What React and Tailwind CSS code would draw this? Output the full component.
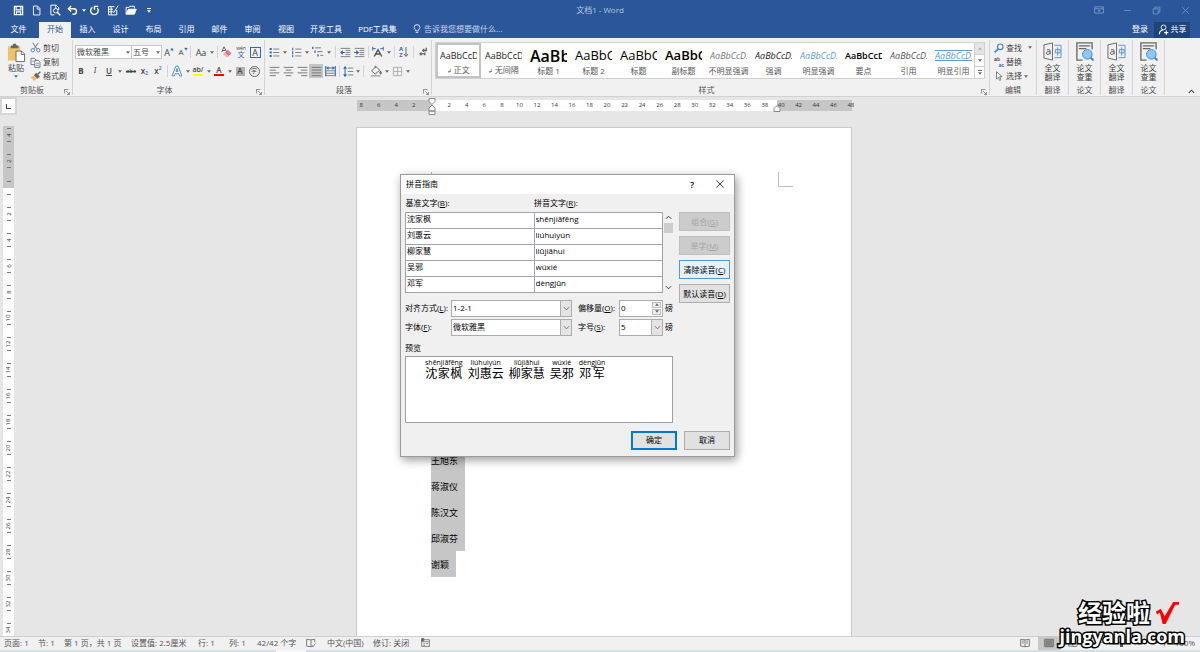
import { clsx } from 'clsx';

const TABS = [
  { name: '插入', width: 'w-[33px]' },
  { name: '设计', width: 'w-[33px]' },
  { name: '布局', width: 'w-[33px]' },
  { name: '引用', width: 'w-[33px]' },
  { name: '邮件', width: 'w-[33px]' },
  { name: '审阅', width: 'w-[33px]' },
  { name: '视图', width: 'w-[34px]' },
  { name: '开发工具', width: 'w-[46px]' },
  { name: 'PDF工具集', width: 'w-[57px]' },
];

const STYLES = [
  { name: '正文', sample: 'AaBbCcDi', mark: true, cls: 'text-[9px] text-[#222]' },
  { name: '无间隔', sample: 'AaBbCcDi', mark: true, cls: 'text-[9px] text-[#222]' },
  { name: '标题 1', sample: 'AaBb', cls: 'text-[16px] font-semibold text-black' },
  { name: '标题 2', sample: 'AaBbC', cls: 'text-[13px] text-black' },
  { name: '标题', sample: 'AaBbC', cls: 'text-[13px] text-black' },
  { name: '副标题', sample: 'AaBbC', cls: 'text-[13px] font-semibold text-black' },
  { name: '不明显强调', sample: 'AaBbCcD.', cls: 'text-[9px] italic text-[#777]' },
  { name: '强调', sample: 'AaBbCcD.', cls: 'text-[9px] italic text-[#222]' },
  { name: '明显强调', sample: 'AaBbCcD.', cls: 'text-[9px] italic text-[#5b9bd5]' },
  { name: '要点', sample: 'AaBbCcD', cls: 'text-[9px] font-semibold text-black' },
  { name: '引用', sample: 'AaBbCcD.', cls: 'text-[9px] italic text-[#555]' },
  { name: '明显引用', sample: 'AaBbCcD.', cls: 'border-y border-[#5b9bd5] text-[9px] italic text-[#5b9bd5]' },
];

const PINYIN = [
  ['沈家枫', 'shēnjiāfēng'],
  ['刘惠云', 'liúhuìyún'],
  ['柳家慧', 'liǔjiāhuì'],
  ['吴邪', 'wúxié'],
  ['邓军', 'dèngjūn'],
];

const NAMES = ['王旭东', '蒋淑仪', '陈汉文', '邱淑芬'];

const range = (from, to) => Array.from({ length: (to - from) / 2 + 1 }, (_, i) => from + i * 2);

const Icon = ({ size = 'size-3', color = '#666', children }) => (
  <svg viewBox="0 0 16 16" className={clsx(size, 'shrink-0')} fill="none" stroke={color} strokeWidth="1.3" aria-hidden="true">
    {children}
  </svg>
);

const Caret = ({ light }) => (
  <svg viewBox="0 0 6 4" className="h-[3px] w-1 shrink-0" aria-hidden="true">
    <path d="M0 0h6L3 4z" fill={light ? '#fff' : '#666'} />
  </svg>
);

const Tool = ({ label, w = 'w-[14px]', className, children }) => (
  <button type="button" aria-label={label} className={clsx('flex h-[14px] shrink-0 items-center justify-center leading-none', w, className)}>
    {children}
  </button>
);

const Drop = ({ label, w = 'w-[7px]' }) => (
  <Tool label={label} w={w}><Caret /></Tool>
);

const Sep = ({ className }) => <span className={clsx('h-3 w-px shrink-0 bg-[#d4d4d4]', className)} />;

const Group = ({ name, width, launcher, children }) => (
  <section aria-label={name} className={clsx('mt-[2px] mb-px flex flex-col border-r border-[#d4d4d4]', width)}>
    <div className="min-h-0 flex-1">{children}</div>
    <div className="flex h-[10px] items-center text-[#555]">
      <span className="flex-1 text-center whitespace-nowrap">{name}</span>
      {launcher && (
        <button type="button" aria-label={`${name}设置`} className="mr-[2px] pt-1">
          <Icon size="size-[6px]">
            <path d="M1 12V1h11M6 6l8 8M15 8v7H8" strokeWidth="2" />
          </Icon>
        </button>
      )}
    </div>
  </section>
);

const Lines = ({ d }) => <Icon size="size-[11px]" color="#777"><path d={d} strokeWidth="1.4" /></Icon>;

const TitleBar = () => (
  <header className="grid h-5 shrink-0 grid-cols-[1fr_auto_1fr] items-center text-white">
    <div className="flex items-center pl-[9px]">
      <Tool label="保存" w="w-[18px]">
        <Icon size="size-[11px]" color="#fff"><path d="M2 2h12v12H2zM4.500 2v5h7V2M5 14v-4h6v4" strokeWidth="1.8" /></Icon>
      </Tool>
      <Tool label="新建" w="w-[18px]">
        <Icon size="size-[11px]" color="#fff"><path d="M3.500 1.500h6l3.500 3.500v9.500h-9.500zM9 2v4h4" /></Icon>
      </Tool>
      <Tool label="打印预览" w="w-[19px]">
        <Icon color="#fff"><path d="M7 14.500H2.500v-13h7L13 5v3M9 2v4" /><circle cx="9" cy="9" r="3" /><path d="M11 11l4 4" strokeWidth="2" /></Icon>
      </Tool>
      <Tool label="撤消" w="w-[17px]">
        <Icon size="size-[11px]" color="#fff"><path d="M6 1.500L2 5.500l4 4M2.500 5.500H10c5 0 5 8 0 8H8" strokeWidth="2" /></Icon>
      </Tool>
      <Tool label="撤消列表" w="w-[5px]"><Caret light /></Tool>
      <Tool label="恢复" w="w-[17px]">
        <Icon size="size-[11px]" color="#fff"><path d="M5 3.500a5.500 5.500 0 1 0 7 1M8 7V2h5.500" strokeWidth="2" /></Icon>
      </Tool>
      <Tool label="表格" w="w-[19px]">
        <Icon color="#fff"><path d="M13 8v6.500H2v-11h8M2 7h6M2 10.500h5M5.500 4v10M7 9l2 2.500L15 2" /></Icon>
      </Tool>
      <Tool label="打开" w="w-[18px]">
        <Icon color="#fff"><path d="M1.500 13.500v-9h4l1-1.500h6v3" /><path d="M1.500 13.500L4.500 7H15l-2.500 6.500z" fill="#fff" /></Icon>
      </Tool>
      <Tool label="自定义快速访问工具栏" w="w-[18px]" className="flex-col gap-px">
        <span className="h-px w-1 bg-white" />
        <Caret light />
      </Tool>
    </div>
    <h1 className="text-[8px] text-[#b5c7e3]">文档1 - Word</h1>
    <div className="flex items-center justify-end">
      <Tool label="功能区显示选项" w="w-[29px]"><Icon size="size-[10px]" color="#7f9cc9"><path d="M1 3h14v10H1zM1 6h14M8 12V8M6 10l2-2 2 2" /></Icon></Tool>
      <Tool label="最小化" w="w-[29px]"><Icon size="size-[9px]" color="#7f9cc9"><path d="M2 8h12" /></Icon></Tool>
      <Tool label="还原" w="w-[29px]"><Icon size="size-[9px]" color="#7f9cc9"><path d="M2 5h9v9H2zM5 5V2h9v9h-3" /></Icon></Tool>
      <Tool label="关闭" w="w-[29px]"><Icon size="size-[9px]" color="#7f9cc9"><path d="M2 2l12 12M14 2L2 14" /></Icon></Tool>
    </div>
  </header>
);

const TabBar = () => (
  <nav className="flex h-[18px] shrink-0 items-stretch text-white">
    <button type="button" className="mr-[2px] w-[37px]">文件</button>
    <button type="button" aria-current="page" className="mt-[2px] w-8 bg-[#f1f1f1] pb-[2px] text-[#2b579a]">开始</button>
    {TABS.map((tab) => (
      <button key={tab.name} type="button" className={clsx('whitespace-nowrap', tab.width)}>{tab.name}</button>
    ))}
    <button type="button" className="ml-[6px] flex items-center gap-[2px] whitespace-nowrap text-[#c8d6ec]">
      <Icon size="size-[10px]" color="#fff"><path d="M6 11c0-2-2.500-3-2.500-5.500a4.500 4.500 0 0 1 9 0C12.500 8 10 9 10 11zM6 13.500h4" /></Icon>
      告诉我您想要做什么...
    </button>
    <button type="button" className="mr-[6px] ml-auto">登录</button>
    <button type="button" className="mt-[2px] mr-[10px] flex w-9 items-center justify-center gap-[2px] bg-[#1e4479] pb-[2px]">
      <Icon size="size-[11px]" color="#fff"><circle cx="8" cy="5" r="3.500" /><path d="M2 15c0-4 2-6 5-6M9 12.500h6M12 9.500v6" strokeWidth="1.600" /></Icon>
      共享
    </button>
  </nav>
);

const ClipboardGroup = () => (
  <Group name="剪贴板" width="w-[73px]" launcher>
    <div className="flex pl-[6px]">
      <button type="button" className="flex w-5 flex-col items-center pt-[3px]">
        <svg viewBox="0 0 20 20" className="h-5 w-[19px]" aria-hidden="true">
          <path d="M1 3h13v15H1z" fill="#eec36d" />
          <path d="M4 2h2a2 2 0 0 1 4 0h2v3H4z" fill="#666" />
          <path d="M9.500 8h6l3 3v8h-9z" fill="#fff" stroke="#666" />
          <path d="M15 8v3.500h3" fill="none" stroke="#666" />
        </svg>
        <span className="leading-[9px]">粘贴</span>
        <span className="flex h-2 items-center"><Caret /></span>
      </button>
      <div className="flex flex-col pl-1">
        <button type="button" className="flex h-[15px] items-center gap-[2px]">
          <Icon size="size-[11px]"><path d="M4 1l6 9M12 1L6 10" /><circle cx="4" cy="12" r="2.500" stroke="#3f7fc0" /><circle cx="12" cy="12" r="2.500" stroke="#3f7fc0" /></Icon>
          剪切
        </button>
        <button type="button" className="flex h-[14px] items-center gap-[2px]">
          <Icon size="size-[11px]"><path d="M1.500 2h5l2 2v7h-7z" fill="#fff" /><path d="M7 5h5l2.500 2.500V15H7z" fill="#fff" /><path d="M9 9h4M9 12h4M3 6h3" stroke="#3f7fc0" /></Icon>
          复制
        </button>
        <button type="button" className="flex h-[14px] items-center gap-[2px] whitespace-nowrap">
          <Icon size="size-[11px]"><path d="M1 9l6-3 4 4-5 5z" fill="#eebb6b" stroke="none" /><path d="M7 6l4 4 2-2-4-4zM11 5l4-4" fill="#666" strokeWidth="2" /></Icon>
          格式刷
        </button>
      </div>
    </div>
  </Group>
);

const FontGroup = () => (
  <Group name="字体" width="w-[192px]" launcher>
    <div className="flex items-center pt-[5px] pl-[2px]">
      <div className="flex h-[14px] w-[57px] items-center border border-[#c6c6c6] bg-white">
        <input aria-label="字体" defaultValue="微软雅黑" className="w-0 flex-1 pl-px outline-none" />
        <Drop label="字体列表" />
      </div>
      <div className="flex h-[14px] w-[30px] items-center border border-l-0 border-[#c6c6c6] bg-white">
        <input aria-label="字号" defaultValue="五号" className="w-0 flex-1 pl-px outline-none" />
        <Drop label="字号列表" />
      </div>
      <Tool label="增大字号" className="text-[9px]">A<Icon size="mb-[6px] size-[4px]" color="#2b6cb8"><path d="M2 13L8 4l6 9z" fill="#2b6cb8" /></Icon></Tool>
      <Tool label="减小字号">A<Icon size="mb-[6px] size-[4px]" color="#2b6cb8"><path d="M2 4l6 9 6-9z" fill="#2b6cb8" /></Icon></Tool>
      <Sep className="mr-[3px]" />
      <Tool label="更改大小写" className="text-[9px]">Aa</Tool>
      <Drop label="大小写选项" />
      <Sep className="mx-[2px]" />
      <Tool label="清除格式">
        <Icon><path d="M3 11l6-6 5 5-6 5z" fill="#e0748a" stroke="none" /><path d="M3 11l2-2 5 4-2 2z" fill="#f3b3bf" stroke="none" /><path d="M1 8l3-7 3 6M2 6h4" /></Icon>
      </Tool>
      <Tool label="拼音指南" className="flex-col">
        <span className="text-[5px] leading-[6px]">wén</span>
        <span className="text-[7px] leading-[8px] text-[#2b6cb8]">文</span>
      </Tool>
      <Tool label="字符边框"><span className="flex size-[11px] items-center justify-center border border-[#2b6cb8] text-[9px]">A</span></Tool>
    </div>
    <div className="flex items-center pt-[5px] pl-px">
      <Tool label="加粗" className="font-bold">B</Tool>
      <Tool label="倾斜" className="font-serif italic">I</Tool>
      <Tool label="下划线" className="font-semibold underline">U</Tool>
      <Drop label="下划线样式" />
      <Tool label="删除线" className="ml-px text-[6px] font-semibold line-through">abc</Tool>
      <Tool label="下标" w="w-[13px]" className="font-semibold">x<span className="mt-[5px] text-[5px] text-[#2b6cb8]">2</span></Tool>
      <Tool label="上标" w="w-[14px]" className="font-semibold">x<span className="mb-[5px] text-[5px] text-[#2b6cb8]">2</span></Tool>
      <Sep className="mx-[2px]" />
      <Tool label="文本效果"><Icon color="#4a86c8"><path d="M1.500 14.500L6.500 1.500h3l5 13h-3l-1-3h-5l-1 3zM6.500 8.500h3L8 4.500z" fill="#fff" /></Icon></Tool>
      <Drop label="文本效果选项" />
      <Tool label="突出显示" className="flex-col">
        <span className="text-[7px] leading-[8px] font-semibold">ab/</span>
        <span className="h-[2px] w-[10px] bg-[#ffff00]" />
      </Tool>
      <Drop label="突出显示颜色" />
      <Tool label="字体颜色" className="flex-col">
        <span className="text-[8px] leading-[8px] font-semibold">A</span>
        <span className="h-[2px] w-[10px] bg-[#ff0000]" />
      </Tool>
      <Drop label="字体颜色选项" />
      <Tool label="字符底纹"><span className="flex size-[9px] items-center justify-center bg-[#b0b0b0] font-semibold">A</span></Tool>
      <Tool label="带圈字符"><span className="flex size-[11px] items-center justify-center rounded-full border border-[#666] text-[6px]">字</span></Tool>
    </div>
  </Group>
);

const ListIcon = ({ numbered }) => (
  <Icon size="size-[11px]">
    <path d="M6 3h9M6 8h9M6 13h9" stroke="#777" />
    <path d={numbered ? 'M2.500 1v4M2.500 6v4M2.500 11v4' : 'M1 3h3M1 8h3M1 13h3'} stroke="#2b6cb8" strokeWidth={numbered ? '1.500' : '3'} />
  </Icon>
);

const ParagraphGroup = () => (
  <Group name="段落" width="w-[167px]" launcher>
    <div className="flex items-center pt-[5px] pl-[2px]">
      <Tool label="项目符号"><ListIcon /></Tool>
      <Drop label="项目符号库" />
      <Tool label="编号" className="ml-px"><ListIcon numbered /></Tool>
      <Drop label="编号库" />
      <Tool label="多级列表" className="ml-px"><Icon><path d="M1 1v3M4 6v3M8 11v3" stroke="#2b6cb8" strokeWidth="1.800" /><path d="M4 2.500h8M7 7.500h7M11 12.500h4" stroke="#777" /></Icon></Tool>
      <Drop label="多级列表库" />
      <Sep className="mr-[2px] ml-[3px]" />
      <Tool label="减少缩进量"><Icon size="size-[11px]"><path d="M1 2h14M8 5h7M8 8h7M8 11h7M1 14h14" stroke="#777" /><path d="M7 8H1.500M4 5.500L1.500 8 4 10.500" stroke="#2b6cb8" strokeWidth="1.800" /></Icon></Tool>
      <Tool label="增加缩进量"><Icon size="size-[11px]"><path d="M1 2h14M8 5h7M8 8h7M8 11h7M1 14h14" stroke="#777" /><path d="M0 8h6M3.500 5.500L6 8l-2.500 2.500" stroke="#2b6cb8" strokeWidth="1.800" /></Icon></Tool>
      <Sep className="mx-[2px]" />
      <Tool label="中文版式"><Icon color="#555"><path d="M3 14l5-9 5 9M5 10.500h6" strokeWidth="2" /><path d="M1 1v5M15 1v5M1 3.500h4M11 3.500h4" stroke="#2b6cb8" /></Icon></Tool>
      <Drop label="中文版式选项" />
      <Sep className="mx-[2px]" />
      <Tool label="排序">
        <span className="flex flex-col text-[6px] leading-[6px] font-bold text-[#2b6cb8]">A<span className="text-[#8a4ba8]">Z</span></span>
        <svg viewBox="0 0 6 12" className="h-3 w-[6px]" fill="none" stroke="#666" aria-hidden="true"><path d="M3 1v9M1 8l2 2.500L5 8" /></svg>
      </Tool>
      <Sep className="mx-[2px]" />
      <Tool label="显示编辑标记"><Icon size="size-[11px]"><path d="M12 1v4H7M9 3L7 5l2 2M9 10H3M5 8l-2 2 2 2M10 8v4" strokeWidth="2" /></Icon></Tool>
    </div>
    <div className="flex items-center pt-[5px] pl-[2px]">
      <Tool label="左对齐"><Lines d="M1 2h14M1 6h9M1 10h14M1 14h9" /></Tool>
      <Tool label="居中"><Lines d="M1 2h14M4 6h8M1 10h14M4 14h8" /></Tool>
      <Tool label="右对齐"><Lines d="M1 2h14M6 6h9M1 10h14M6 14h9" /></Tool>
      <Tool label="两端对齐" className="bg-[#c5c5c5]"><Lines d="M1 2h14M1 6h14M1 10h14M1 14h14" /></Tool>
      <Tool label="分散对齐"><Icon size="size-[11px]" color="#777"><path d="M1 7h14M1 10.500h14M1 14h14" /><path d="M1 0v15M15 0v15M2 3h12M5 1L3 3l2 2M11 1l2 2-2 2" stroke="#2b6cb8" strokeWidth="1.500" /></Icon></Tool>
      <Sep className="mx-[2px]" />
      <Tool label="行距" w="w-3"><Icon size="size-[11px]"><path d="M7 3h8M7 8h8M7 13h8" stroke="#777" /><path d="M3 1v14M1 4l2-3 2 3M1 12l2 3 2-3" stroke="#2b6cb8" strokeWidth="1.500" /></Icon></Tool>
      <Drop label="行距选项" />
      <Sep className="mr-[5px] ml-[2px]" />
      <Tool label="底纹"><Icon><path d="M2 8l6-6 5 5-6 5zM7 4V1" /><path d="M14 8c2 3 1 4 0 4s-1-2 0-4z" fill="#666" /><path d="M1 14.500h13" strokeWidth="2" stroke="#aaa" /></Icon></Tool>
      <Drop label="底纹颜色" />
      <Tool label="边框"><Icon size="size-[11px]" color="#aaa"><path d="M2 2h12v12H2zM8 2v12M2 8h12" /></Icon></Tool>
      <Drop label="边框选项" />
    </div>
  </Group>
);

const StylesGroup = () => (
  <Group name="样式" width="min-w-0 flex-1" launcher>
    <div className="flex pt-[2px] pr-1 pl-[3px]">
      <div className="flex h-[37px] min-w-0 flex-1 overflow-hidden border border-[#d0d0d0] bg-white">
        {STYLES.map((style, i) => (
          <button
            key={style.name}
            type="button"
            className={clsx('flex w-[45px] shrink-0 flex-col items-center border-2', i === 0 ? 'border-[#c3c3c3]' : 'border-transparent')}
          >
            <span className="flex h-[21px] w-[37px] items-center overflow-hidden">
              <span className={clsx('leading-none whitespace-nowrap', style.cls)}>{style.sample}</span>
            </span>
            <span className="leading-[10px] whitespace-nowrap text-[#555]">
              {style.mark && <span className="text-[6px]">↲ </span>}
              {style.name}
            </span>
          </button>
        ))}
      </div>
      <div className="flex w-[10px] flex-col border border-l-0 border-[#d0d0d0] bg-white">
        <button type="button" aria-label="上一行" className="flex flex-1 items-center justify-center border-b border-[#d0d0d0] bg-[#e4e4e4]"><span className="rotate-180 opacity-40"><Caret /></span></button>
        <button type="button" aria-label="下一行" className="flex flex-1 items-center justify-center border-b border-[#d0d0d0]"><Caret /></button>
        <button type="button" aria-label="其他样式" className="flex flex-1 flex-col items-center justify-center gap-px"><span className="h-px w-1 bg-[#666]" /><Caret /></button>
      </div>
    </div>
  </Group>
);

const EditGroup = () => (
  <Group name="编辑" width="w-[47px]">
    <div className="flex flex-col pl-1">
      <button type="button" className="flex h-[15px] items-center gap-[2px]">
        <Icon size="size-[10px]" color="#3f7fc0"><circle cx="10" cy="6" r="4.500" strokeWidth="1.800" /><path d="M7 9.500L1 15" strokeWidth="2.500" /></Icon>
        查找
        <span className="ml-1"><Caret /></span>
      </button>
      <button type="button" className="flex h-[14px] items-center gap-[2px]">
        <span className="flex w-[10px] flex-col text-[5px] leading-[6px] font-bold">
          <span className="self-start">a<span className="text-[#8a4ba8]">b</span></span>
          <span className="self-end text-[#2b6cb8]">ac</span>
        </span>
        替换
      </button>
      <button type="button" className="flex h-[14px] items-center gap-[2px]">
        <Icon size="size-[10px]"><path d="M4 1v12l3-3 2 5 2-1-2-5h4z" fill="#fff" /></Icon>
        选择
        <Caret />
      </button>
    </div>
  </Group>
);

const TranslateIcon = () => (
  <svg viewBox="0 0 20 20" className="size-[19px]" fill="none" aria-hidden="true">
    <path d="M1 3l9-2v18l-9-2z" stroke="#666" />
    <path d="M12 3.500h7v13h-7M15.500 5.500v9M13 8h5v3.500h-5z" stroke="#5a94d6" />
    <path d="M4 8.500c2-1 3.500-.5 3.500 1V13M7.500 10C5 10 3.500 10.500 3.500 12s2.500 1.500 4-.5" stroke="#555" />
  </svg>
);

const CheckIcon = () => (
  <svg viewBox="0 0 20 20" className="size-[19px]" fill="none" aria-hidden="true">
    <path d="M8 19H2V1h16v7" stroke="#666" strokeWidth="1.400" />
    <path d="M4 4h12M4 7h8" stroke="#666" strokeWidth="1.400" />
    <circle cx="13" cy="13" r="5" fill="#90c8f5" stroke="#3f8ad0" />
    <path d="M16.500 16.500l3 3" stroke="#3f7fc0" strokeWidth="2" />
  </svg>
);

const AddinGroup = ({ name, top, bottom, icon, width = 'w-8' }) => (
  <Group name={name} width={width}>
    <button type="button" className="flex w-full flex-col items-center pt-[2px] leading-[9px]">
      {icon}
      <span className="mt-[2px]">{top}</span>
      <span>{bottom}</span>
    </button>
  </Group>
);

const Ribbon = () => (
  <div className="flex h-[59px] shrink-0 border-b border-[#d2d2d2] bg-[#f1f1f1] text-[#444]">
    <ClipboardGroup />
    <FontGroup />
    <ParagraphGroup />
    <StylesGroup />
    <EditGroup />
    <AddinGroup name="翻译" top="全文" bottom="翻译" icon={<TranslateIcon />} />
    <AddinGroup name="论文" top="论文" bottom="查重" icon={<CheckIcon />} />
    <AddinGroup name="翻译" top="全文" bottom="翻译" icon={<TranslateIcon />} />
    <AddinGroup name="论文" top="论文" bottom="查重" icon={<CheckIcon />} />
    <div className="flex w-[35px] items-end justify-end pr-[5px] pb-px">
      <button type="button" aria-label="折叠功能区"><Icon size="size-[7px]" color="#444"><path d="M2 11l6-6 6 6" strokeWidth="2.500" /></Icon></button>
    </div>
  </div>
);

const RulerNumbers = ({ values }) => values.map((n) => (
  <span key={n} className="flex-1 basis-0 text-center">{n}</span>
));

const HorizontalRuler = () => (
  <div className="flex h-[11px] w-[495px] text-[6px] leading-[11px] text-[#333]">
    <div className="w-[75px] bg-[#c6c6c6]">
      <div className="-ml-1 flex w-[70px]"><RulerNumbers values={[8, 6, 4, 2]} /></div>
    </div>
    <div className="relative flex flex-1 bg-white pr-[3px] pl-[9px]">
      <RulerNumbers values={range(2, 38)} />
      <svg viewBox="0 0 8 17" className="absolute -top-[2px] -left-1 h-[17px] w-2" fill="#fff" stroke="#888" aria-hidden="true">
        <path d="M1 .5h6v3l-3 3-3-3zM1 13V10l3-3 3 3v3zM1 13h6v3.500H1z" />
      </svg>
      <svg viewBox="0 0 8 7" className="absolute top-[5px] -right-1 h-[7px] w-2" fill="#fff" stroke="#888" aria-hidden="true">
        <path d="M1 6.500v-3l3-3 3 3v3z" />
      </svg>
    </div>
    <div className="w-[75px] bg-[#c6c6c6]">
      <div className="-ml-1 flex w-[87px]"><RulerNumbers values={range(40, 48)} /></div>
    </div>
  </div>
);

const Tick = () => <span className="h-px w-1 shrink-0 bg-[#777]" />;

const RulerCell = ({ n }) => (
  <div className="flex h-[26px] shrink-0 flex-col items-center justify-between py-[6px]">
    <Tick />
    <span className="-rotate-90 leading-[8px]">{n}</span>
    <Tick />
  </div>
);

const VerticalRuler = () => (
  <div className="ml-[3px] flex min-h-0 w-[11px] flex-1 flex-col overflow-hidden text-[6px] text-[#333]">
    <div className="flex h-[62px] shrink-0 flex-col justify-end overflow-hidden bg-[#c6c6c6]">
      <RulerCell n={4} />
      <RulerCell n={2} />
      <div className="flex h-[14px] shrink-0 items-center justify-center"><Tick /></div>
    </div>
    <div className="flex-1 bg-white">
      <div className="flex h-[13px] items-center justify-center"><Tick /></div>
      {range(2, 34).map((n) => <RulerCell key={n} n={n} />)}
    </div>
  </div>
);

const Workspace = () => (
  <main className="flex min-h-0 flex-1 overflow-hidden bg-[#e6e6e6]">
    <div className="flex w-[17px] shrink-0 flex-col">
      <button type="button" aria-label="制表符" className="mb-[11px] flex h-[18px] items-center justify-center border-2 border-[#d6d6d6] bg-white">
        <span className="size-[5px] border-b border-l border-[#444]" />
      </button>
      <VerticalRuler />
    </div>
    <div className="flex min-w-0 flex-1 flex-col items-center pt-[3px] pr-[9px]">
      <HorizontalRuler />
      <article className="mt-[16px] min-h-0 w-[496px] flex-1 border border-b-0 border-[#c9c9c9] bg-white">
        <div className="flex justify-between pt-[44px] pr-[58px] pl-[60px]">
          <span className="size-[15px] border-r border-b border-[#bbb]" />
          <span className="size-[15px] border-b border-l border-[#bbb]" />
        </div>
        <div className="mt-[260px] ml-[74px] flex flex-col items-start text-[9px] leading-6 text-black">
          {NAMES.map((name) => (
            <p key={name} className="w-[34px] bg-[#c6c6c6] pt-[2px] whitespace-nowrap">{name}</p>
          ))}
          <p className="w-[25px] bg-[#c6c6c6] pt-[2px] whitespace-nowrap">谢颖</p>
        </div>
      </article>
    </div>
  </main>
);

const StatusBar = () => (
  <footer className="shrink-0">
    <div className="flex h-[14px] items-center border-t border-[#cfcfcf] bg-[#f1f1f1] pb-[2px] whitespace-nowrap text-[#555]">
      <span className="w-[34px] pl-1">页面: 1</span>
      <span className="w-[26px] pl-1">节: 1</span>
      <span className="w-[67px] pl-1">第 1 页，共 1 页</span>
      <span className="w-[67px] pl-1">设置值: 2.5厘米</span>
      <span className="w-[31px] pl-1">行: 1</span>
      <span className="w-7 pl-1">列: 1</span>
      <span className="w-[50px] pl-1">42/42 个字</span>
      <Tool label="校对" w="ml-[3px] w-[10px]"><Icon size="size-[10px]"><path d="M8 3L1 2v11l7 1 3-1M8 3v11M8 3l6-1v5M10 12l1 2 4-5" /></Icon></Tool>
      <span className="w-[50px] pl-[11px]">中文(中国)</span>
      <span className="w-[54px] pl-[7px]">修订: 关闭</span>
      <Tool label="宏录制" w="w-[10px]"><Icon size="size-[9px]"><path d="M1 3h14v12H1zM1 6.500h14M4 10h3M9 10h4M4 13h3" /><circle cx="3" cy="3" r="2.500" fill="#666" /></Icon></Tool>
      <div className="ml-auto flex items-center pr-[5px]">
        <Tool label="阅读视图" w="w-[26px]"><Icon size="size-[10px]"><path d="M8 3L1 2v11l7 1 7-1V2zM8 3v11M3 5h3M3 8h3M10 5h3M10 8h3" /></Icon></Tool>
        <Tool label="页面视图" w="w-[23px]" className="bg-[#c8c8c8]"><Icon size="size-[10px]"><path d="M1 2h14v12H1z" fill="#999" /><path d="M3 5h10M3 8h10M3 11h10" /></Icon></Tool>
        <Tool label="Web 版式视图" w="w-6"><Icon size="size-[10px]"><path d="M1 2h10v11H1zM3 5h6M3 8h4" /><circle cx="11" cy="10" r="4" fill="#f1f1f1" /></Icon></Tool>
        <input type="range" aria-label="缩放" defaultValue="50" className="h-[10px] w-[74px] appearance-none bg-transparent [&::-webkit-slider-runnable-track]:h-px [&::-webkit-slider-runnable-track]:bg-[#999] [&::-webkit-slider-thumb]:-mt-1 [&::-webkit-slider-thumb]:h-[9px] [&::-webkit-slider-thumb]:w-[3px] [&::-webkit-slider-thumb]:appearance-none [&::-webkit-slider-thumb]:bg-[#555]" />
        <Tool label="放大" w="w-3"><Icon size="size-[7px]"><path d="M8 1v14M1 8h14" strokeWidth="3" /></Icon></Tool>
        <span className="ml-1">100%</span>
      </div>
    </div>
    <div className="h-[2px] bg-[#cfe0e8] pl-[276px]"><div className="h-full w-[30px] bg-[#f4f8fa]" /></div>
  </footer>
);

const Key = ({ text, k }) => <>{text}(<span className="underline">{k}</span>)</>;

const Chevron = () => (
  <span className="pointer-events-none flex w-[11px] items-center justify-center self-stretch border-l border-[#adadad] bg-[#e4e4e4]">
    <Icon size="size-[7px]"><path d="M2 5l6 6 6-6" strokeWidth="2" /></Icon>
  </span>
);

const SelectBox = ({ id, value, width }) => (
  <div className={clsx('flex h-[17px] items-center border border-[#adadad] bg-white', width)}>
    <select id={id} defaultValue={value} className="w-0 flex-1 appearance-none pl-px outline-none">
      <option>{value}</option>
    </select>
    <Chevron />
  </div>
);

const SideButton = ({ text, k, disabled, active }) => (
  <button
    type="button"
    disabled={disabled}
    className={clsx(
      'h-[19px] w-[51px] border whitespace-nowrap',
      disabled && 'border-[#bfbfbf] bg-[#cccccc] text-[#a5a5a5]',
      active && 'border-[#4a9be0] bg-[#e5f1fb]',
      !disabled && !active && 'border-[#adadad] bg-[#e1e1e1]'
    )}
  >
    <Key text={text} k={k} />
  </button>
);

const PinyinDialog = () => (
  <div role="dialog" aria-label="拼音指南" className="absolute top-[174px] left-[400px] w-[335px] border border-[#9a9a9a] bg-[#f0f0f0] pb-[6px] text-black shadow-[2px_3px_9px_rgba(0,0,0,0.4)]">
    <div className="flex h-[19px] items-center bg-white pb-px pl-[5px]">
      <h2 className="flex-1">拼音指南</h2>
      <Tool label="帮助" w="w-7" className="text-[9px] font-semibold">?</Tool>
      <Tool label="关闭" w="w-7"><Icon size="size-[8px]" color="#222"><path d="M1 1l14 14M15 1L1 15" strokeWidth="1.800" /></Icon></Tool>
    </div>

    <div className="flex justify-between pr-1 pl-1">
      <div className="flex flex-col">
        <div className="flex items-end">
          <table className="w-[258px] table-fixed border-collapse">
            <thead>
              <tr className="h-[18px] text-left">
                <th className="p-0 font-normal"><Key text="基准文字" k="B" />:</th>
                <th className="p-0 font-normal"><Key text="拼音文字" k="R" />:</th>
              </tr>
            </thead>
            <tbody>
              {PINYIN.map(([base, text]) => (
                <tr key={base} className="h-4">
                  <td className="border border-[#a3a3ab] bg-white p-0"><input aria-label={`基准文字 ${base}`} defaultValue={base} className="block h-[15px] w-full pb-[3px] pl-px outline-none" /></td>
                  <td className="border border-[#a3a3ab] bg-white p-0"><input aria-label={`拼音文字 ${base}`} defaultValue={text} className="block h-[15px] w-full pb-[3px] pl-px outline-none" /></td>
                </tr>
              ))}
            </tbody>
          </table>
          <div className="flex h-[81px] w-[11px] flex-col items-center py-[2px]">
            <Icon size="size-[7px]" color="#333"><path d="M2 11l6-6 6 6" strokeWidth="2.200" /></Icon>
            <span className="mt-[2px] h-[10px] w-[9px] bg-[#cdcdcd]" />
            <span className="mt-auto flex"><Icon size="size-[7px]" color="#333"><path d="M2 5l6 6 6-6" strokeWidth="2.200" /></Icon></span>
          </div>
        </div>

        <div className="mt-[7px] flex items-center">
          <label htmlFor="align" className="w-[46px] whitespace-nowrap"><Key text="对齐方式" k="L" />:</label>
          <SelectBox id="align" value="1-2-1" width="w-[121px]" />
          <label htmlFor="offset" className="w-[47px] pl-[6px] whitespace-nowrap"><Key text="偏移量" k="O" />:</label>
          <div className="flex h-[17px] w-[44px] items-center border border-[#adadad] bg-white">
            <input id="offset" defaultValue="0" className="w-0 flex-1 pl-px outline-none" />
            <div className="mr-px flex h-[13px] w-[9px] flex-col gap-px">
              <button type="button" aria-label="增加" className="flex flex-1 items-center justify-center border border-[#bbb] bg-[#f0f0f0]"><span className="rotate-180"><Caret /></span></button>
              <button type="button" aria-label="减少" className="flex flex-1 items-center justify-center border border-[#bbb] bg-[#f0f0f0]"><Caret /></button>
            </div>
          </div>
          <span className="pl-[2px]">磅</span>
        </div>
        <div className="mt-[2px] flex items-center">
          <label htmlFor="face" className="w-[46px]"><Key text="字体" k="F" />:</label>
          <SelectBox id="face" value="微软雅黑" width="w-[121px]" />
          <label htmlFor="size" className="w-[47px] pl-[6px]"><Key text="字号" k="S" />:</label>
          <SelectBox id="size" value="5" width="w-[44px]" />
          <span className="pl-[2px]">磅</span>
        </div>

        <h3 className="mt-[6px] mb-[2px] leading-[12px]">预览</h3>
        <div className="flex h-[67px] w-[268px] gap-[5px] border border-[#a0a0a0] bg-white pt-[2px] pl-[19px] text-[12px]">
          {PINYIN.map(([base, text]) => (
            <ruby key={base} className="leading-[20px] whitespace-nowrap">{base}<rt className="text-[7px] leading-[7px]">{text}</rt></ruby>
          ))}
        </div>
      </div>

      <div className="flex flex-col gap-[5px] pt-[18px]">
        <SideButton text="组合" k="G" disabled />
        <SideButton text="单字" k="M" disabled />
        <SideButton text="清除读音" k="C" active />
        <SideButton text="默认读音" k="D" />
      </div>
    </div>

    <div className="mt-[8px] flex justify-end gap-[7px] pr-1">
      <button type="button" className="h-[19px] w-[46px] border-2 border-[#0078d7] bg-[#e1e1e1]">确定</button>
      <button type="button" className="h-[19px] w-[46px] border border-[#adadad] bg-[#e1e1e1]">取消</button>
    </div>
  </div>
);

const Watermark = () => (
  <div className="pointer-events-none absolute right-[15px] bottom-[6px] font-bold whitespace-nowrap text-white">
    <div className="flex items-center justify-end gap-[6px] pr-[6px]">
      <span className="text-[24px] leading-[27px] [-webkit-text-stroke:3px_black] [paint-order:stroke]">经验啦</span>
      <svg viewBox="0 0 24 24" className="size-[23px]" aria-label="√">
        <path d="M0 11l5-3 4 8L18 1h6v3h-4L10 24H7L4 12l-3 2z" fill="#f00" />
      </svg>
    </div>
    <div className="text-[18px] leading-[20px] [-webkit-text-stroke:3px_black] [paint-order:stroke]">jingyanla.com</div>
  </div>
);

export default function App() {
  return (
    <div className="relative flex h-screen flex-col overflow-hidden bg-[#2b579a] font-['Open_Sans','Noto_Sans_CJK_SC',sans-serif] text-[8px] leading-[12px]">
      <TitleBar />
      <TabBar />
      <Ribbon />
      <Workspace />
      <StatusBar />
      <PinyinDialog />
      <Watermark />
    </div>
  );
}
